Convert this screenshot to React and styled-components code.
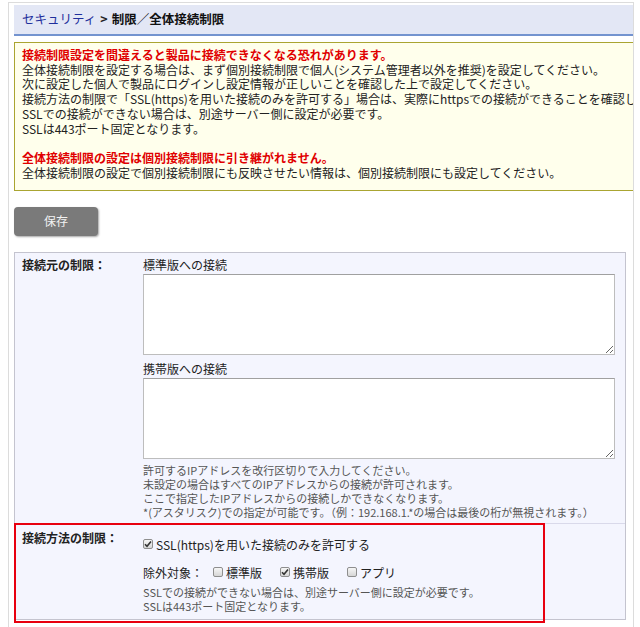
import React from "react";
import styled, { createGlobalStyle } from "styled-components";

const Global = createGlobalStyle`
  html, body { margin: 0; padding: 0; background: #ffffff; }
  body {
    font-family: "Noto Sans CJK JP", "Noto Sans", "Liberation Sans", sans-serif;
    font-size: 12px;
    color: #222;
  }
`;

const Frame = styled.div`
  margin: 2px 0 0 8px;
  width: 626px;
  height: 640px;
  border: 1px solid #dcdcdc;
  border-bottom: none;
  padding: 2px 0 0 5px;
  box-sizing: border-box;
  overflow: hidden;
`;

const Header = styled.div`
  height: 29px;
  background: #e3e7f5;
  border-bottom: 2px solid #7393cf;
  display: flex;
  align-items: center;
  padding-left: 8px;
  font-size: 12.5px;
  line-height: 1;
  gap: 4px;
`;

const Crumb = styled.span`
  color: #1f2f9c;
`;

const Sep = styled.span`
  color: #222;
  font-weight: bold;
`;

const Current = styled.span`
  color: #111;
  font-weight: bold;
`;

const Warning = styled.div`
  margin-top: 6px;
  margin-right: -40px;
  border: 1px solid #aaa531;
  background: #ffffec;
  padding: 5px 8px 10px 7px;
  line-height: 14.7px;
  white-space: nowrap;
`;

const Line = styled.div`
  color: ${(p) => (p.$alert ? "#e00000" : "#222")};
  font-weight: ${(p) => (p.$alert ? "bold" : "normal")};
  min-height: 14.7px;
`;

const SaveButton = styled.button`
  margin-top: 16px;
  width: 84px;
  height: 29px;
  border: none;
  border-radius: 4px;
  background: #7a7a7a;
  color: #f2f2f2;
  font-family: inherit;
  font-size: 12px;
  box-shadow: 1px 1px 2px rgba(0, 0, 0, 0.35);
  display: block;
  padding: 0 0 2px;
`;

const Table = styled.div`
  margin-top: 16px;
  margin-right: 7px;
  border: 1px solid #c4c4cf;
  background: #f4f5fe;
`;

const Row = styled.div`
  position: relative;
  display: grid;
  grid-template-columns: 128px 1fr;
  border-top: ${(p) => (p.$first ? "none" : "1px solid #d9d9ea")};
  padding-bottom: ${(p) => p.$pb || 0}px;
`;

const Label = styled.div`
  padding: ${(p) => p.$pt || 5}px 0 0 7px;
  font-weight: bold;
  line-height: 14px;
  color: #222;
`;

const Value = styled.div`
  padding: 5px 10px 0 0;
  display: flex;
  flex-direction: column;
`;

const FieldTitle = styled.div`
  line-height: 14px;
  margin-top: ${(p) => p.$mt || 0}px;
`;

const Area = styled.textarea`
  margin-top: 2px;
  width: 472px;
  height: 81px;
  box-sizing: border-box;
  border: 1px solid #bdbdbd;
  border-top-color: #a0a0a0;
  background: #ffffff;
  resize: both;
`;

const Help = styled.div`
  margin-top: ${(p) => p.$mt || 4}px;
  font-size: 11px;
  line-height: 14px;
  color: #555;
  white-space: nowrap;
`;

const CheckRow = styled.div`
  display: flex;
  align-items: center;
  height: 16px;
  margin-top: ${(p) => p.$mt || 0}px;
  font-size: 12px;
`;

const Option = styled.label`
  display: inline-flex;
  align-items: center;
  gap: 3px;
  margin-right: 18px;
`;

const Box = styled.span`
  width: 10px;
  height: 10px;
  box-sizing: border-box;
  border: 1px solid #8e8e8e;
  border-radius: 2px;
  background: linear-gradient(#f6f6f6, #d6d6d6);
  display: inline-flex;
  align-items: center;
  justify-content: center;
`;

const Prefix = styled.span`
  margin-right: 10px;
`;

const Highlight = styled.div`
  position: absolute;
  left: -1px;
  top: -1px;
  width: 531px;
  height: 100px;
  border: 2px solid #e8000f;
  box-sizing: border-box;
  pointer-events: none;
`;

function Check({ checked, children }) {
  return (
    <Option>
      <Box>
        {checked && (
          <svg width="8" height="8" viewBox="0 0 8 8">
            <path d="M1 4.2 L3 6.2 L7 1.4" fill="none" stroke="#333" strokeWidth="1.6" />
          </svg>
        )}
      </Box>
      {children}
    </Option>
  );
}

export default function App() {
  return (
    <>
      <Global />
      <Frame>
        <Header>
          <Crumb>セキュリティ</Crumb>
          <Sep>&gt;</Sep>
          <Current>制限／全体接続制限</Current>
        </Header>
        <Warning>
          <Line $alert>接続制限設定を間違えると製品に接続できなくなる恐れがあります。</Line>
          <Line>全体接続制限を設定する場合は、まず個別接続制限で個人(システム管理者以外を推奨)を設定してください。</Line>
          <Line>次に設定した個人で製品にログインし設定情報が正しいことを確認した上で設定してください。</Line>
          <Line>接続方法の制限で「SSL(https)を用いた接続のみを許可する」場合は、実際にhttpsでの接続ができることを確認した上で設定してください。</Line>
          <Line>SSLでの接続ができない場合は、別途サーバー側に設定が必要です。</Line>
          <Line>SSLは443ポート固定となります。</Line>
          <Line />
          <Line $alert>全体接続制限の設定は個別接続制限に引き継がれません。</Line>
          <Line>全体接続制限の設定で個別接続制限にも反映させたい情報は、個別接続制限にも設定してください。</Line>
        </Warning>
        <SaveButton>保存</SaveButton>
        <Table>
          <Row $first $pb={4}>
            <Label>接続元の制限：</Label>
            <Value>
              <FieldTitle>標準版への接続</FieldTitle>
              <Area />
              <FieldTitle $mt={7}>携帯版への接続</FieldTitle>
              <Area />
              <Help>
                許可するIPアドレスを改行区切りで入力してください。<br />
                未設定の場合はすべてのIPアドレスからの接続が許可されます。<br />
                ここで指定したIPアドレスからの接続しかできなくなります。<br />
                *(アスタリスク)での指定が可能です。（例：192.168.1.*の場合は最後の桁が無視されます。）
              </Help>
            </Value>
          </Row>
          <Row $pb={6}>
            <Label $pt={7}>接続方法の制限：</Label>
            <Value>
              <CheckRow $mt={7}>
                <Check checked>SSL(https)を用いた接続のみを許可する</Check>
              </CheckRow>
              <CheckRow $mt={12}>
                <Prefix>除外対象：</Prefix>
                <Check>標準版</Check>
                <Check checked>携帯版</Check>
                <Check>アプリ</Check>
              </CheckRow>
              <Help $mt={5}>
                SSLでの接続ができない場合は、別途サーバー側に設定が必要です。<br />
                SSLは443ポート固定となります。
              </Help>
            </Value>
            <Highlight />
          </Row>
        </Table>
      </Frame>
    </>
  );
}
